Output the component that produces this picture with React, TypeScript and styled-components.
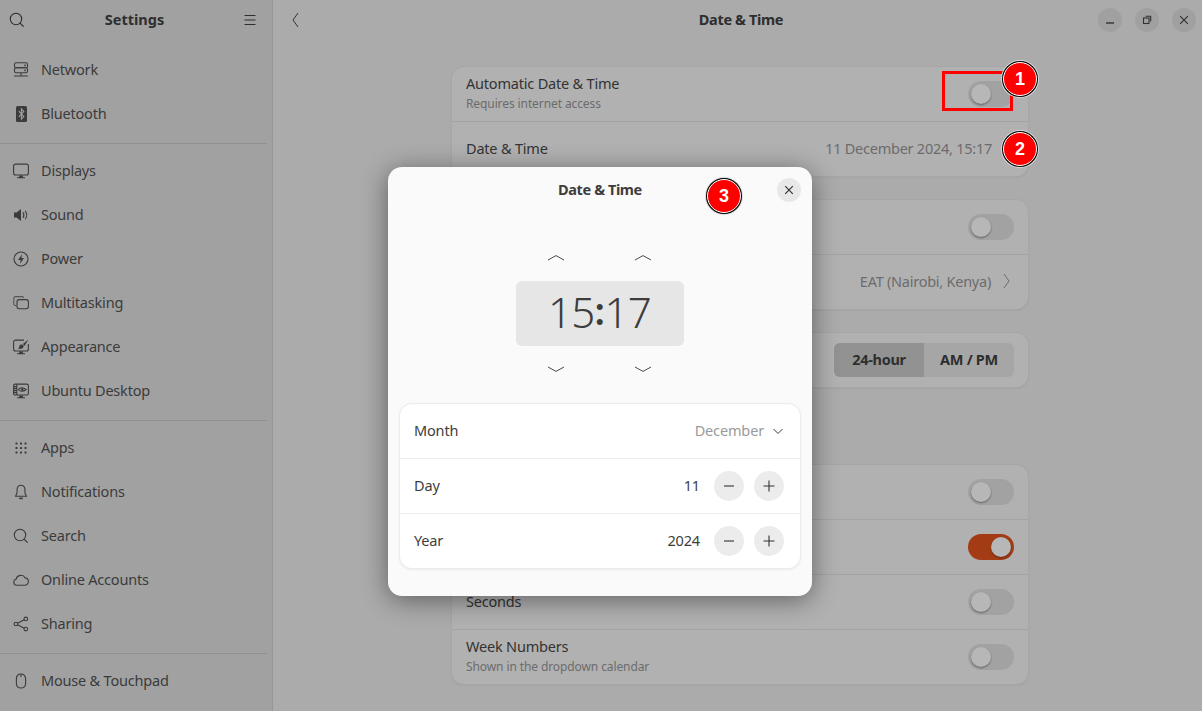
import { FC, ReactNode } from 'react';
import styled, { createGlobalStyle } from 'styled-components';

const GlobalStyle = createGlobalStyle`
  html, body {
    margin: 0;
    padding: 0;
    background: #ababab;
  }

  body {
    font-family: "Noto Sans", "Open Sans", sans-serif;
    font-size: 14.5px;
    color: #333;
  }
`;

const Window = styled.div`
  position: relative;
  display: flex;
  width: 1202px;
  height: 711px;
  overflow: hidden;
  background: #ababab;
`;

const Sidebar = styled.aside`
  flex: 0 0 272px;
  display: flex;
  flex-direction: column;
  background: #a1a1a1;
  border-right: 1px solid #979797;
`;

const SidebarHeader = styled.header`
  flex: 0 0 40px;
  display: flex;
  align-items: center;
  justify-content: space-between;
  padding: 0 16px 0 9px;
  color: #2e2e2e;
`;

const SidebarTitle = styled.span`
  padding-bottom: 2px;
  font-size: 14.5px;
  font-weight: 700;
  color: #2e2e2e;
`;

const SideList = styled.nav`
  padding-top: 8px;
`;

const SideItem = styled.div`
  display: flex;
  align-items: center;
  gap: 12px;
  height: 44px;
  padding-left: 13px;
  font-size: 14.5px;
  letter-spacing: -0.2px;
  color: #3b3b3b;
`;

const SideLabel = styled.span`
  padding-bottom: 2px;
`;

const SideRule = styled.hr`
  height: 1px;
  margin: 7px 5px 5px 0;
  border: 0;
  background: #909090;
`;

const Main = styled.main`
  flex: 1;
  display: flex;
  flex-direction: column;
  min-width: 0;
`;

const HeaderBar = styled.header`
  flex: 0 0 40px;
  display: flex;
  align-items: center;
  padding: 0 6px 0 18px;
  color: #333;
`;

const HeaderTitle = styled.span`
  flex: 1;
  padding: 0 0 2px 84px;
  text-align: center;
  font-size: 14.5px;
  font-weight: 700;
  letter-spacing: -0.35px;
  color: #2e2e2e;
`;

const WindowButtons = styled.div`
  display: flex;
  gap: 13px;
`;

const RoundButton = styled.span<{ $size: number; $bg: string }>`
  display: flex;
  align-items: center;
  justify-content: center;
  width: ${(props) => props.$size}px;
  height: ${(props) => props.$size}px;
  border-radius: 50%;
  background: ${(props) => props.$bg};
  color: #333;
`;

const Content = styled.div`
  display: flex;
  flex-direction: column;
  align-items: center;
  padding: 27px 0 0 5px;
`;

const Card = styled.section`
  width: 576px;
  margin-bottom: 24px;
  background: #b1b1b1;
  border-radius: 12px;
  box-shadow: 0 0 0 1px #a6a6a6, 0 1px 2px rgba(0, 0, 0, 0.12);
`;

const Row = styled.div`
  display: flex;
  align-items: center;
  justify-content: space-between;
  height: 54px;
  padding: 0 14px;

  & + & {
    border-top: 1px solid #a4a4a4;
  }
`;

const RowText = styled.div`
  display: flex;
  flex-direction: column;
  gap: 1px;
  padding-bottom: 1px;
`;

const RowTitle = styled.span`
  padding-bottom: 2px;
  font-size: 14.5px;
  letter-spacing: -0.2px;
  line-height: 17px;
  color: #333;
`;

const RowSubtitle = styled.span`
  font-size: 12px;
  letter-spacing: -0.1px;
  line-height: 17px;
  color: #6c6c6c;
`;

const RowValue = styled.span<{ $end?: boolean }>`
  display: flex;
  align-items: center;
  gap: 11px;
  margin-right: ${(props) => (props.$end ? 3 : 22)}px;
  padding-bottom: 2px;
  font-size: 14.5px;
  letter-spacing: -0.25px;
  color: #6c6c6c;
`;

const SectionHeading = styled.h2`
  width: 576px;
  height: 54px;
  margin: 0;
  font-size: 14.5px;
  font-weight: 700;
  color: #333;
`;

const Track = styled.span<{ $on?: boolean }>`
  position: relative;
  display: block;
  width: 46px;
  height: 26px;
  border-radius: 13px;
  background: ${(props) => (props.$on ? '#a33c14' : '#a2a2a2')};
`;

const Knob = styled.span<{ $on?: boolean }>`
  position: absolute;
  top: 3px;
  left: ${(props) => (props.$on ? '23px' : '3px')};
  width: 20px;
  height: 20px;
  border-radius: 50%;
  background: #b7b7b7;
  box-shadow: 0 1px 2px rgba(0, 0, 0, 0.4);
`;

const Segmented = styled.div`
  display: flex;
  height: 34px;
  overflow: hidden;
  border-radius: 6px;
  background: #a6a6a6;
`;

const Segment = styled.span<{ $active?: boolean }>`
  display: flex;
  align-items: center;
  justify-content: center;
  width: 90px;
  padding-bottom: 2px;
  box-sizing: border-box;
  font-size: 14.5px;
  font-weight: 700;
  letter-spacing: -0.3px;
  color: #2e2e2e;
  background: ${(props) => (props.$active ? '#929292' : 'transparent')};
`;

const Dialog = styled.div`
  position: absolute;
  top: 167px;
  left: 388px;
  display: flex;
  flex-direction: column;
  box-sizing: border-box;
  width: 424px;
  height: 429px;
  padding: 0 12px;
  border-radius: 14px;
  background: #fafafa;
  box-shadow: 0 4px 26px rgba(0, 0, 0, 0.45);
`;

const DialogHeader = styled.header`
  position: relative;
  display: flex;
  align-items: center;
  justify-content: flex-end;
  height: 46px;
  margin-right: -1px;
`;

const DialogTitle = styled.span`
  position: absolute;
  left: 0;
  right: 1px;
  padding-bottom: 2px;
  text-align: center;
  font-size: 14.5px;
  font-weight: 700;
  letter-spacing: -0.4px;
  color: #3d3d3d;
`;

const ChevronRow = styled.div<{ $top: number; $bottom: number }>`
  display: flex;
  justify-content: center;
  margin: ${(props) => props.$top}px 0 ${(props) => props.$bottom}px;
  padding-right: 2px;
  color: #4a4a4a;
`;

const ChevronSlot = styled.span`
  display: flex;
  justify-content: center;
  width: 87px;
`;

const TimeBox = styled.div`
  align-self: center;
  display: flex;
  align-items: center;
  justify-content: center;
  box-sizing: border-box;
  width: 168px;
  height: 65px;
  padding: 0 1px 4px 0;
  border-radius: 6px;
  background: #e6e6e6;
  font-size: 42px;
  font-weight: 300;
  letter-spacing: -0.7px;
  color: #3d3d3d;
`;

const TimeColon = styled.span`
  padding-bottom: 4px;
  font-weight: 600;
  font-size: 38px;
  line-height: 1;
`;

const DialogCard = styled.section`
  flex: none;
  background: #fff;
  border-radius: 12px;
  box-shadow: 0 0 0 1px #ececec, 0 1px 3px rgba(0, 0, 0, 0.12);
`;

const DialogRow = styled.div`
  display: flex;
  align-items: center;
  justify-content: space-between;
  height: 54px;
  padding: 0 16px 0 14px;
  font-size: 14.5px;
  letter-spacing: -0.15px;
  color: #3d3d3d;

  & + & {
    border-top: 1px solid #ececec;
  }
`;

const DialogLabel = styled.span`
  padding-bottom: 2px;
`;

const DialogControls = styled.div`
  display: flex;
  align-items: center;
  gap: 10px;
`;

const DialogValue = styled.span`
  margin-right: 4px;
  padding-bottom: 2px;
`;

const MonthValue = styled.span`
  display: flex;
  align-items: center;
  gap: 8px;
  color: #9a9a9a;

  svg {
    color: #3d3d3d;
  }
`;

const Marker = styled.div`
  position: absolute;
  top: 71px;
  left: 942px;
  box-sizing: border-box;
  width: 71px;
  height: 40px;
  border: 3px solid #f00;
`;

const Badge = styled.span<{ $x: number; $y: number }>`
  position: absolute;
  left: ${(props) => props.$x - 17}px;
  top: ${(props) => props.$y - 17}px;
  display: flex;
  align-items: center;
  justify-content: center;
  box-sizing: border-box;
  width: 34px;
  height: 34px;
  border-radius: 50%;
  border: 1px solid #fff;
  box-shadow: 0 0 0 1px #000, 0 0 0 2px #d8d8d8;
  background: #f00;
  font-family: "Liberation Sans", sans-serif;
  font-size: 18px;
  font-weight: 700;
  color: #fff;
`;

const Svg = styled.svg.attrs({ fill: 'none', stroke: 'currentColor' })`
  display: block;
  flex: none;
`;

const Icon: FC<{ size?: number; w?: number; h?: number; children: ReactNode }> = ({ size = 16, w, h, children }) => (
  <Svg width={w ?? size} height={h ?? size} viewBox={`0 0 ${w ?? size} ${h ?? size}`} strokeWidth={1.1}>
    {children}
  </Svg>
);

const MonitorStand = () => <path d="M6.2 12.5h3.6v1.7H12v1H4v-1h2.2z" fill="currentColor" stroke="none" />;

const icons: Record<string, ReactNode> = {
  Network: (
    <>
      <rect x="1.5" y="0.8" width="13" height="5" rx="1.6" />
      <rect x="1.5" y="5.8" width="13" height="5" rx="1.6" />
      <path d="M1 14h14M8 11v3" />
      <circle cx="12" cy="3.3" r="0.9" fill="currentColor" stroke="none" />
      <circle cx="12" cy="8.3" r="0.9" fill="currentColor" stroke="none" />
    </>
  ),
  Bluetooth: (
    <>
      <rect x="3" y="0" width="11" height="16" rx="1.6" fill="currentColor" stroke="none" />
      <path d="M5.8 5.2l5 5.2L8.4 13V3l2.4 2.6-5 5.2" stroke="#a1a1a1" />
    </>
  ),
  Displays: (
    <>
      <rect x="0.6" y="1.1" width="14.8" height="10.9" rx="2" />
      <MonitorStand />
    </>
  ),
  Sound: (
    <>
      <path d="M1 5.5h2.6L8 2v12l-4.4-3.5H1z" fill="currentColor" stroke="none" />
      <path d="M10 5.2c1 1.6 1 4 0 5.6M12.2 3.8c1.9 2.4 1.9 6 0 8.4" />
    </>
  ),
  Power: (
    <>
      <circle cx="8" cy="8" r="7" />
      <path d="M9 3.2L5 9h2.6L7 12.8 11 7H8.4z" fill="currentColor" stroke="none" />
    </>
  ),
  Multitasking: (
    <>
      <path d="M3.2 10.5H2.4A1.6 1.6 0 0 1 .8 8.9V3.2a1.6 1.6 0 0 1 1.6-1.6h6.8a1.6 1.6 0 0 1 1.5 1.2" opacity="0.75" />
      <rect x="4" y="4.6" width="11.4" height="9.2" rx="2.2" />
    </>
  ),
  Appearance: (
    <>
      <path d="M11 1.1H2.6a2 2 0 0 0-2 2V10a2 2 0 0 0 2 2h10.8a2 2 0 0 0 2-2V5" />
      <path d="M15.5.5L9.6 5.2c1 .3 1.6 1 1.8 1.8z" fill="currentColor" stroke="none" />
      <path d="M8.4 5.6c1.6 0 2.5 1.2 2.2 2.5-.4 1.4-2.3 2-5.6 1.8 1.2-.7 1-1.6 1.3-2.6.3-1 1-1.7 2.1-1.7z" fill="currentColor" stroke="none" />
      <MonitorStand />
    </>
  ),
  'Ubuntu Desktop': (
    <>
      <rect x="0.6" y="1.1" width="14.8" height="10.9" rx="1.6" />
      <path d="M.8 3.6h3M.8 5.6h3M.8 7.6h3M.8 9.6h3M3.8 1.2V12" />
      <path d="M5.4 6.5c1.6-2.4 5.2-2.4 7.6 0-2.4 2.4-6 2.4-7.6 0z" />
      <circle cx="9.2" cy="6.5" r="1.3" fill="currentColor" stroke="none" />
      <MonitorStand />
    </>
  ),
  Apps: (
    <g fill="currentColor" stroke="none">
      {[3.5, 8, 12.5].flatMap((y) =>
        [3.5, 8, 12.5].map((x) => <rect key={`${x}-${y}`} x={x - 1} y={y - 1} width="2" height="2" rx="0.5" />),
      )}
    </g>
  ),
  Notifications: (
    <>
      <path d="M8 1.2a3.9 3.9 0 0 0-3.9 3.9v3.6L2.6 12.2h10.8l-1.5-3.5V5.1A3.9 3.9 0 0 0 8 1.2z" />
      <path d="M6.2 14.4h3.6" strokeWidth="1.6" />
    </>
  ),
  Search: (
    <>
      <circle cx="7" cy="7" r="5.7" />
      <path d="M11.1 11.1l3.5 3.5" strokeWidth="1.3" />
    </>
  ),
  'Online Accounts': (
    <path d="M3.8 13.2a3.1 3.1 0 0 1-.7-6.1 4.9 4.9 0 0 1 9.1-1.2 3.7 3.7 0 0 1 3.2 3.6 3.6 3.6 0 0 1-3.6 3.7z" />
  ),
  Sharing: (
    <>
      <circle cx="2.9" cy="8" r="1.8" />
      <circle cx="12.8" cy="2.9" r="1.8" />
      <circle cx="12.8" cy="13.1" r="1.8" />
      <path d="M4.5 7.2l6.7-3.5M4.5 8.8l6.7 3.5" />
    </>
  ),
  'Mouse & Touchpad': (
    <>
      <path d="M8 1c-3 0-4.6 1.8-4.6 5v4.4c0 2.8 1.8 4.6 4.6 4.6s4.6-1.8 4.6-4.6V6c0-3.2-1.6-5-4.6-5z" />
      <path d="M8 1v3" />
    </>
  ),
};

const sideGroups = [
  ['Network', 'Bluetooth'],
  ['Displays', 'Sound', 'Power', 'Multitasking', 'Appearance', 'Ubuntu Desktop'],
  ['Apps', 'Notifications', 'Search', 'Online Accounts', 'Sharing'],
  ['Mouse & Touchpad'],
];

const Toggle: FC<{ on?: boolean }> = ({ on }) => (
  <Track $on={on}>
    <Knob $on={on} />
  </Track>
);

const ChevronUp = () => (
  <Icon w={18} h={7}>
    <path d="M1 6l8-4.4L17 6" strokeWidth="1" />
  </Icon>
);

const ChevronDown = () => (
  <Icon w={18} h={7}>
    <path d="M1 1l8 4.4L17 1" strokeWidth="1" />
  </Icon>
);

const ChevronTall = () => (
  <Icon w={9} h={16}>
    <path d="M2 1l5 7-5 7" strokeWidth="1" />
  </Icon>
);

const Minus = () => (
  <Icon size={14}>
    <path d="M2 7h10" />
  </Icon>
);

const Plus = () => (
  <Icon size={14}>
    <path d="M1.5 7h11M7 1.5v11" />
  </Icon>
);

const CloseMark = () => (
  <Icon size={10}>
    <path d="M1.2 1.2l7.6 7.6M8.8 1.2L1.2 8.8" strokeWidth="1.2" />
  </Icon>
);

const Stepper = () => (
  <>
    <RoundButton $size={30} $bg="#ececec">
      <Minus />
    </RoundButton>
    <RoundButton $size={30} $bg="#ececec">
      <Plus />
    </RoundButton>
  </>
);

export default function App() {
  return (
    <>
      <GlobalStyle />
      <Window>
        <Sidebar>
          <SidebarHeader>
            <Icon>
              <circle cx="7" cy="7" r="5.7" />
              <path d="M11.1 11.1l3.5 3.5" strokeWidth="1.3" />
            </Icon>
            <SidebarTitle>Settings</SidebarTitle>
            <Icon size={12}>
              <path d="M.5 1.5h11M.5 6h11M.5 10.5h11" />
            </Icon>
          </SidebarHeader>
          <SideList>
            {sideGroups.map((group, index) => (
              <div key={group[0]}>
                {index > 0 && <SideRule />}
                {group.map((name) => (
                  <SideItem key={name}>
                    <Icon>{icons[name]}</Icon>
                    <SideLabel>{name}</SideLabel>
                  </SideItem>
                ))}
              </div>
            ))}
          </SideList>
        </Sidebar>

        <Main>
          <HeaderBar>
            <Icon w={9} h={16}>
              <path d="M7 1L2 8l5 7" strokeWidth="1" />
            </Icon>
            <HeaderTitle>Date &amp; Time</HeaderTitle>
            <WindowButtons>
              <RoundButton $size={24} $bg="#a0a0a0">
                <Icon size={10}>
                  <path d="M1 8h8" strokeWidth="1.4" />
                </Icon>
              </RoundButton>
              <RoundButton $size={24} $bg="#a0a0a0">
                <Icon size={10}>
                  <rect x="1.5" y="3" width="5.5" height="5.5" />
                  <path d="M3.5 1.2h5.2v5.2" />
                </Icon>
              </RoundButton>
              <RoundButton $size={24} $bg="#a0a0a0">
                <CloseMark />
              </RoundButton>
            </WindowButtons>
          </HeaderBar>

          <Content>
            <Card>
              <Row>
                <RowText>
                  <RowTitle>Automatic Date &amp; Time</RowTitle>
                  <RowSubtitle>Requires internet access</RowSubtitle>
                </RowText>
                <Toggle />
              </Row>
              <Row>
                <RowTitle>Date &amp; Time</RowTitle>
                <RowValue>11 December 2024, 15:17</RowValue>
              </Row>
            </Card>
            <Card>
              <Row>
                <RowTitle>Automatic Time Zone</RowTitle>
                <Toggle />
              </Row>
              <Row>
                <RowTitle>Time Zone</RowTitle>
                <RowValue $end>
                  EAT (Nairobi, Kenya)
                  <ChevronTall />
                </RowValue>
              </Row>
            </Card>
            <Card>
              <Row>
                <RowTitle>Time Format</RowTitle>
                <Segmented>
                  <Segment $active>24-hour</Segment>
                  <Segment>AM / PM</Segment>
                </Segmented>
              </Row>
            </Card>
            <SectionHeading>Clock &amp; Calendar</SectionHeading>
            <Card>
              <Row>
                <RowTitle>Weekday</RowTitle>
                <Toggle />
              </Row>
              <Row>
                <RowTitle>Date</RowTitle>
                <Toggle on />
              </Row>
              <Row>
                <RowTitle>Seconds</RowTitle>
                <Toggle />
              </Row>
              <Row>
                <RowText>
                  <RowTitle>Week Numbers</RowTitle>
                  <RowSubtitle>Shown in the dropdown calendar</RowSubtitle>
                </RowText>
                <Toggle />
              </Row>
            </Card>
          </Content>
        </Main>

        <Marker />
        <Badge $x={1020} $y={79}>1</Badge>
        <Badge $x={1020} $y={149}>2</Badge>

        <Dialog>
          <DialogHeader>
            <DialogTitle>Date &amp; Time</DialogTitle>
            <RoundButton $size={24} $bg="#e8e8e8">
              <CloseMark />
            </RoundButton>
          </DialogHeader>
          <ChevronRow $top={41} $bottom={20}>
            <ChevronSlot>
              <ChevronUp />
            </ChevronSlot>
            <ChevronSlot>
              <ChevronUp />
            </ChevronSlot>
          </ChevronRow>
          <TimeBox>
            15<TimeColon>:</TimeColon>17
          </TimeBox>
          <ChevronRow $top={20} $bottom={31}>
            <ChevronSlot>
              <ChevronDown />
            </ChevronSlot>
            <ChevronSlot>
              <ChevronDown />
            </ChevronSlot>
          </ChevronRow>
          <DialogCard>
            <DialogRow>
              <DialogLabel>Month</DialogLabel>
              <MonthValue>
                <DialogLabel>December</DialogLabel>
                <Icon w={12} h={7}>
                  <path d="M1.5 1l4.5 4.5L10.5 1" strokeWidth="1" />
                </Icon>
              </MonthValue>
            </DialogRow>
            <DialogRow>
              <DialogLabel>Day</DialogLabel>
              <DialogControls>
                <DialogValue>11</DialogValue>
                <Stepper />
              </DialogControls>
            </DialogRow>
            <DialogRow>
              <DialogLabel>Year</DialogLabel>
              <DialogControls>
                <DialogValue>2024</DialogValue>
                <Stepper />
              </DialogControls>
            </DialogRow>
          </DialogCard>
        </Dialog>

        <Badge $x={724} $y={196}>3</Badge>
      </Window>
    </>
  );
}
